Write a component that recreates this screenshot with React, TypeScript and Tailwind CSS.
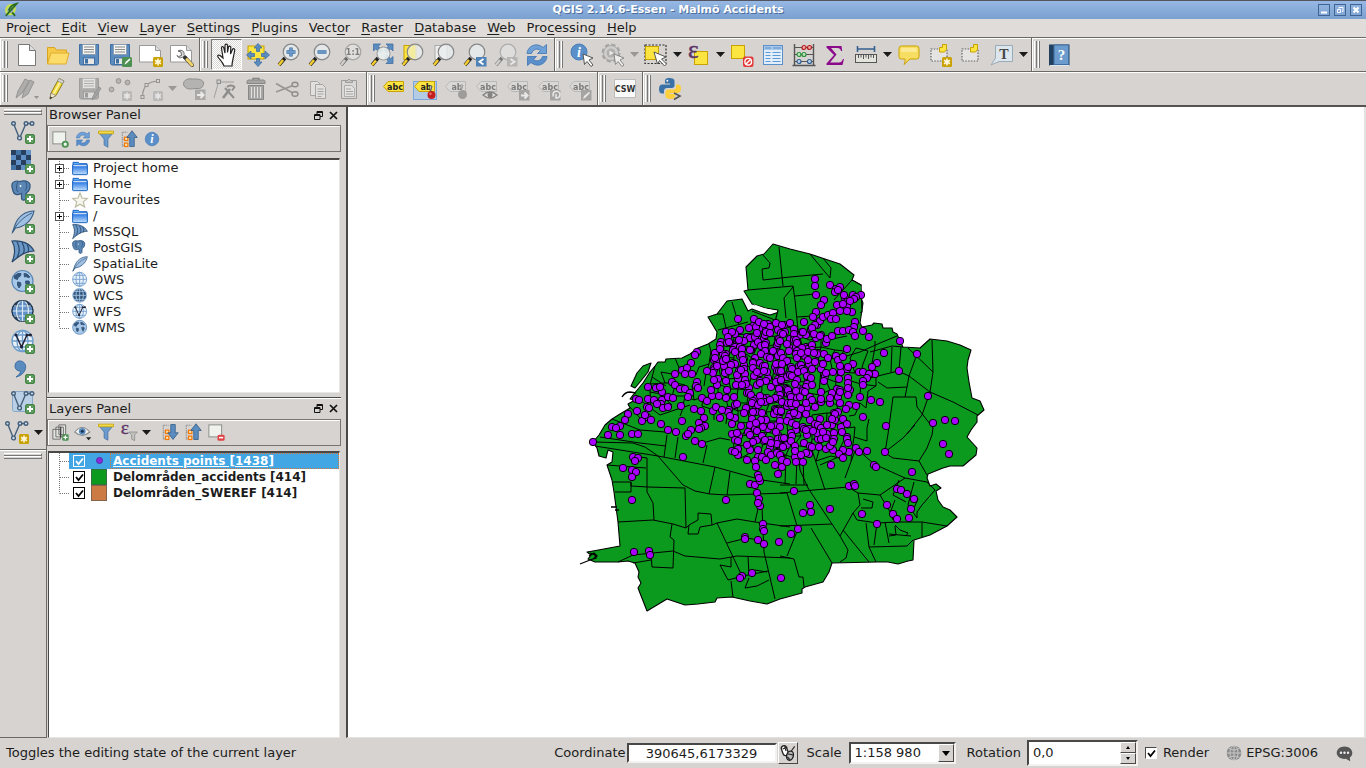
import React from "react";

type IconProps = { size?: number; className?: string; children?: React.ReactNode };

function Svg({ size = 24, className = "", children }: IconProps) {
  return (
    <svg width={size} height={size} viewBox="0 0 24 24" fill="none" aria-hidden="true" className={`block shrink-0 overflow-visible ${className}`}>
      {children}
    </svg>
  );
}

/* ---------- badges shared by several icons ---------- */

const PlusBadge = () => (
  <g>
    <rect x="14.5" y="14.5" width="9" height="9" rx="1.5" fill="#5a9a5a" stroke="#478247" />
    <path d="M19 16v6M16 19h6" stroke="#fff" strokeWidth="2" />
  </g>
);

const StarBadge = () => (
  <g>
    <rect x="14" y="14" width="10" height="10" rx="1.5" fill="#c9a100" />
    <path d="M19 15.5v7M16 17.2l6 3.6M22 17.2l-6 3.6" stroke="#fff8dc" strokeWidth="1.6" />
  </g>
);

const Cursor = () => (
  <path d="M13 11l10 4-4 2 4 5-2 1.5-4-5-2.5 3z" fill="#fff" stroke="#555" strokeWidth="1" />
);

/* ---------- file ---------- */

const NewFile = () => (
  <Svg>
    <path d="M3.5 1.5h11l6 6v15h-17z" fill="#fff" stroke="#777" />
    <path d="M14.500 1.500v6h6" fill="#ddd" stroke="#777" />
  </Svg>
);
const OpenFile = () => (
  <Svg>
    <path d="M1.500 20.500v-16h7l2 2.500h10v4" fill="#f5c94a" stroke="#d9a520" />
    <path d="M1.500 21l3.500-11h18l-3 11z" fill="#fcdc6a" stroke="#e0ae2c" />
  </Svg>
);
const FloppyArt = () => (
  <g>
    <path d="M2.500 1.500h19v19l-1 1.500h-17l-1-1.500z" fill="#5b8cc0" stroke="#3f6ea3" />
    <rect x="5.500" y="1.500" width="13" height="10" fill="#f4f4f2" stroke="#8a9cb0" />
    <path d="M7 4h10M7 6.500h10M7 9h10" stroke="#888" />
    <rect x="6.500" y="15" width="11" height="6.500" fill="#e6e6e4" stroke="#3f6ea3" />
    <rect x="8" y="16" width="3" height="4.500" fill="#3f6ea3" />
  </g>
);
const Save = () => <Svg><FloppyArt /></Svg>;
const SaveAs = () => (
  <Svg>
    <FloppyArt />
    <rect x="14" y="14" width="10" height="10" rx="1.500" fill="#4c9052" />
    <path d="M16.500 21.500l1-2.500 4-3.500 1 1-4 4z" fill="#fff" />
  </Svg>
);
const SheetArt = () => (
  <g>
    <path d="M.5 2.500h16l5 5v11.500h-21z" fill="#fff" stroke="#999" />
    <path d="M16.500 2.500v5h5" fill="#ddd" stroke="#999" />
  </g>
);
const NewComposer = () => <Svg><SheetArt /><StarBadge /></Svg>;
const ComposerManager = () => (
  <Svg>
    <SheetArt />
    <path d="M8 8l3 1 .5 3.500-3 1-1.500-1c1.500 3 4 2.500 5.500 1.500l2 2 2-2-2.500-2.500c.5-3-2-5-5-4z" fill="#ddd" stroke="#666" />
    <path d="M15 14.500l7 7.500" stroke="#333" strokeWidth="4" strokeLinecap="round" />
    <path d="M17 16.500l5 5.500" stroke="#f0d36a" strokeWidth="3" strokeLinecap="round" />
  </Svg>
);

/* ---------- map navigation ---------- */

const Pan = () => (
  <Svg>
    <path d="M9 23c-1-4-4-6-6-9-1-1.500.5-2.500 2-1.500l3 2.500L6.500 5C6.300 3.300 8.300 3 8.800 4.800L10 10V2.500c0-1.800 2.500-1.800 2.500 0V9.500l1-5.500c.4-1.500 2.500-1.200 2.300.5L15.500 11l2-4.500c.7-1.400 2.500-.8 2.200.8-.7 4-1.200 6-1.700 8.700-.5 2-1 4-1 7z" fill="#fff" stroke="#222" strokeWidth="1.200" />
  </Svg>
);
const fourArrows = "M12 .5l4 4.500h-2.500v3.500h-3V5H8zM12 23.500l4-4.500h-2.500v-3.500h-3V19H8zM.5 12L5 8v2.500h3.500v3H5V16zM23.500 12L19 8v2.500h-3.500v3H19V16z";
const PanSelection = () => (
  <Svg>
    <rect x="2" y="3" width="16" height="13" fill="#fce540" stroke="#c9a100" />
    <path d={fourArrows} fill="#5b8cc0" stroke="#3f6ea3" strokeWidth=".8" />
  </Svg>
);
const LensArt = ({ cx = 14, cy = 9 }: { cx?: number; cy?: number }) => (
  <g>
    <path d={`M${cx - 6} ${cy + 6}L2 22`} stroke="#222" strokeWidth="3.500" />
    <path d={`M${cx - 8} ${cy + 8}L2 22`} stroke="#f4cf2e" strokeWidth="2.500" />
    <circle cx={cx} cy={cy} r="7.800" fill="#e9eeee" fillOpacity=".8" stroke="#888" strokeWidth="1.200" />
  </g>
);
const ZoomIn = () => (
  <Svg><LensArt /><path d="M14 4.500v9M9.500 9h9" stroke="#3f6ea3" strokeWidth="3.400" /><path d="M14 5v8M10 9h8" stroke="#6c9ccd" strokeWidth="1.800" /></Svg>
);
const ZoomOut = () => (
  <Svg><LensArt /><path d="M9.500 9h9" stroke="#3f6ea3" strokeWidth="3.400" /><path d="M10 9h8" stroke="#6c9ccd" strokeWidth="1.800" /></Svg>
);
const ZoomActual = () => (
  <Svg className="opacity-60 grayscale">
    <LensArt />
    <text x="14" y="12" textAnchor="middle" fontSize="8" fontWeight="bold" fontFamily="DejaVu Sans, sans-serif" fill="#444">1:1</text>
  </Svg>
);
const ZoomFull = () => (
  <Svg>
    <path d="M3.500 1h7l-2.300 2.300 4 4-2.500 2.500-4-4L3.500 8zM23 1h-7l2.300 2.300-4 4 2.500 2.500 4-4L23 8zM23 20.500h-7l2.300-2.300-4-4 2.500-2.500 4 4 2.200-2.200z" fill="#5b8cc0" stroke="#3f6ea3" strokeWidth=".8" />
    <path d="M8 15l-6 7" stroke="#222" strokeWidth="3.500" />
    <path d="M6 17.500L2 22" stroke="#f4cf2e" strokeWidth="2.500" />
    <circle cx="13.500" cy="10.500" r="6.500" fill="#e9eeee" fillOpacity=".9" stroke="#999" />
  </Svg>
);
const ZoomSelection = () => (
  <Svg><rect x="3" y="2.500" width="12" height="14" fill="#fce540" stroke="#c9a100" /><LensArt /><path d="M14 2.500a6.500 6.500 0 0 0 0 13z" fill="#f5ec8c" opacity=".7" /></Svg>
);
const ZoomLayer = () => (
  <Svg><rect x="3" y="2.500" width="12" height="14" fill="#eee" stroke="#aaa" /><LensArt /></Svg>
);
const ZoomLast = () => (
  <Svg>
    <LensArt />
    <rect x="13" y="14" width="10.500" height="9.500" fill="#4f83b8" />
    <path d="M20.500 16l-4 2.800 4 2.700" stroke="#fff" strokeWidth="1.800" />
  </Svg>
);
const ZoomNext = () => (
  <Svg className="opacity-50 grayscale">
    <LensArt />
    <rect x="13" y="14" width="10.500" height="9.500" fill="#999" />
    <path d="M16.500 16l4 2.800-4 2.700" stroke="#fff" strokeWidth="1.800" />
  </Svg>
);
const Refresh = ({ size = 24 }: IconProps) => (
  <Svg size={size}>
    <path d="M2 10.500C2.500 5 7.500 1 13 2c2 .4 3.700 1.200 5 2.500L21.500 1.500v9h-9l3-3c-3-2.500-7.500-1.500-9 3z" fill="#6fa0d6" stroke="#3f75b3" strokeWidth=".8" />
    <path d="M22 13.500c-.5 5.500-5.500 9.500-11 8.500-2-.4-3.700-1.200-5-2.500l-3.500 3v-9h9l-3 3c3 2.500 7.500 1.500 9-3z" fill="#5b8fcb" stroke="#3f75b3" strokeWidth=".8" />
  </Svg>
);

/* ---------- attributes ---------- */

const Identify = () => (
  <Svg>
    <circle cx="9" cy="9" r="8" fill="#5b8fc9" stroke="#4a7db5" />
    <text x="9" y="14" textAnchor="middle" fontSize="14" fontStyle="italic" fontWeight="bold" fontFamily="Liberation Serif, serif" fill="#fff">i</text>
    <Cursor />
  </Svg>
);
const RunAction = () => (
  <Svg className="opacity-60 grayscale">
    <circle cx="10" cy="10" r="8" stroke="#888" strokeWidth="3" strokeDasharray="4 2.300" />
    <circle cx="10" cy="10" r="7.500" fill="#ccc" stroke="#888" />
    <circle cx="10" cy="10" r="4.500" fill="#999" />
    <path d="M8.500 7.500v5l4-2.500z" fill="#fff" />
    <Cursor />
  </Svg>
);
const SelectFeature = () => (
  <Svg>
    <rect x="1" y="2" width="21" height="18.500" stroke="#333" strokeWidth="1.200" strokeDasharray="2 1.500" />
    <rect x="1.500" y="3.500" width="13" height="13" fill="#fce540" stroke="#c9a100" />
    <path d="M10 9l12 5-4.500 2 5 5-2 2-5-5.500-2 3.500z" fill="#fff" stroke="#555" />
  </Svg>
);
const SelectExpression = () => (
  <Svg>
    <rect x="7.500" y="8.500" width="13" height="13" fill="#fce540" stroke="#c9a100" />
    <text x="1" y="15" fontSize="25" fontFamily="Liberation Serif, serif" fill="#5c3566" stroke="#5c3566" strokeWidth=".5">ε</text>
  </Svg>
);
const Deselect = () => (
  <Svg>
    <rect x="1.500" y="2.500" width="13" height="13" fill="#fce540" stroke="#c9a100" />
    <rect x="13" y="13.500" width="10.500" height="10.500" rx="2" fill="#e23a3a" />
    <circle cx="18.200" cy="18.700" r="3.300" stroke="#fff" strokeWidth="1.400" />
    <path d="M16 21l4.500-4.500" stroke="#fff" strokeWidth="1.400" />
  </Svg>
);
const AttributeTable = () => (
  <Svg>
    <rect x="2.500" y="2.500" width="19" height="19" fill="#e4eefa" stroke="#5b8fc9" />
    <rect x="3" y="3" width="18" height="4" fill="#a8c8ea" />
    <path d="M4 5h6M12 5h8" stroke="#5b8fc9" />
    <path d="M4.500 9.500h5M4.500 12.500h5M4.500 15.500h5M4.500 18.500h5M11.500 9.500h8M11.500 12.500h8M11.500 15.500h8M11.500 18.500h8" stroke="#5b9bd5" />
  </Svg>
);
const Calculator = () => (
  <Svg>
    <path d="M2.500 1v21M21.500 1v21M.5 22.500h23" stroke="#555" strokeWidth="1.400" />
    <path d="M2 4.500h20M2 11.500h20M2 18.500h20" stroke="#555" />
    <g strokeWidth="1.200">
      <circle cx="12" cy="4.500" r="2" fill="#f3a5a5" stroke="#b02020" />
      <circle cx="17.500" cy="4.500" r="2" fill="#f3a5a5" stroke="#b02020" />
      <circle cx="7" cy="11.500" r="2" fill="#bfe6bf" stroke="#2f8f3f" />
      <circle cx="12" cy="11.500" r="2" fill="#bfe6bf" stroke="#2f8f3f" />
      <circle cx="7" cy="18.500" r="2" fill="#bcd6ee" stroke="#35618f" />
      <circle cx="17.500" cy="18.500" r="2" fill="#bcd6ee" stroke="#35618f" />
    </g>
  </Svg>
);
const Statistics = () => (
  <Svg>
    <path d="M3.500 3h15l.7 5h-1.200c-.6-2.300-1.500-3-3.500-3H8l5.500 6.500L7 19.500h9c2 0 3-1 4-3.500h1l-1.500 6H3.500v-1.500l7.500-8.500L3.500 4.500z" fill="#8b0a8b" />
  </Svg>
);
const Measure = () => (
  <Svg>
    <path d="M3.500 6h17M3.500 3v6M20.500 3v6" stroke="#35618f" strokeWidth="1.600" />
    <rect x="1.500" y="11.500" width="21" height="8" fill="#e4e4de" stroke="#555" />
    <path d="M4.500 12v3M7 12v2.500M9.500 12v4M12 12v2.500M14.500 12v4M17 12v2.500M19.500 12v3" stroke="#555" />
  </Svg>
);
const MapTips = () => (
  <Svg>
    <path d="M4.500 3h15q2.500 0 2.500 2.500v8q0 2.500-2.500 2.500H13l-6 5.500c1-2 1.300-3.500 1-5.500H4.500Q2 16 2 13.500v-8Q2 3 4.500 3z" fill="#f7dd62" stroke="#c9a100" />
    <path d="M5 5h13q2 0 2 2v2H4V6.500z" fill="#fcf0a8" opacity=".7" />
  </Svg>
);
const BookmarkArt = () => (
  <g>
    <rect x="3" y="6" width="16" height="12" fill="#e6e4e2" stroke="#666" strokeWidth="1.200" strokeDasharray="1.500 1.300" />
    <path d="M11.500 4.500h3v-3h4v5l-2 2.500h-5z" fill="#fce540" stroke="#c9a100" />
  </g>
);
const NewBookmark = () => <Svg><BookmarkArt /><StarBadge /></Svg>;
const ShowBookmarks = () => <Svg><BookmarkArt /></Svg>;
const Annotation = () => (
  <Svg>
    <path d="M5.500 2.500h17v16H9l-8 3.500 4.500-7z" fill="#dde6ec" stroke="#9aabb8" />
    <text x="14" y="15.500" textAnchor="middle" fontSize="14" fontWeight="bold" fontFamily="Liberation Serif, serif" fill="#444">T</text>
  </Svg>
);
const HelpBook = () => (
  <Svg>
    <rect x="2" y="1.500" width="20.500" height="21" fill="#22405f" />
    <rect x="7" y="2" width="14.500" height="19.500" fill="#6c9ccd" stroke="#3f6ea3" />
    <path d="M3 22.500h19" stroke="#dfe6ee" />
    <text x="14.500" y="17" textAnchor="middle" fontSize="15" fontWeight="bold" fontFamily="Liberation Serif, serif" fill="#fff">?</text>
  </Svg>
);

/* ---------- digitizing ---------- */

const Pencils = () => (
  <Svg className="opacity-50 grayscale">
    <path d="M1 21l2-7L10 2l4 2-7 12zM7 21l2-7L15 3l4 2-6 12z" fill="#888" stroke="#555" />
    <path d="M19 19h5l-2.500 3z" fill="#555" />
  </Svg>
);
const Pencil = () => (
  <Svg>
    <path d="M4 22l1-6L13 1.500l5 2.500-8 14.500z" fill="#f3da3c" stroke="#8a7a1a" />
    <path d="M7.500 17L15.500 2.700" stroke="#fff7b0" strokeWidth="1.500" />
    <path d="M4 22l1-6 5 2.500z" fill="#f5e6c8" stroke="#777" strokeWidth=".7" />
    <path d="M13 1.500l5 2.500-1.500 2.500-5-2.500z" fill="#d5d5d5" stroke="#888" strokeWidth=".7" />
    <path d="M4 22l.4-2.500 1.800 1z" fill="#222" />
  </Svg>
);
const SaveEdits = () => (
  <Svg className="opacity-50 grayscale"><FloppyArt /><path d="M15 23l1-4 6-9 2 1.500-6 9z" fill="#777" stroke="#444" strokeWidth=".8" /></Svg>
);
const AddPoint = () => (
  <Svg className="opacity-50 grayscale">
    <g fill="#999" stroke="#555"><circle cx="3.500" cy="12.500" r="2.400" /><circle cx="10.500" cy="4" r="2.400" /><circle cx="19.500" cy="5.500" r="2.400" /></g>
    <StarBadge />
  </Svg>
);
const CircularString = () => (
  <Svg className="opacity-50 grayscale">
    <path d="M3.500 20C3.500 10 8 4.500 19 4" stroke="#555" strokeWidth="1.200" />
    <g fill="#ddd" stroke="#555"><rect x="2" y="18.500" width="3" height="3" /><rect x="6" y="6.500" width="3" height="3" /><rect x="17.500" y="2.500" width="3" height="3" /></g>
    <StarBadge />
  </Svg>
);
const MoveFeature = () => (
  <Svg className="opacity-55 grayscale">
    <path d="M2 9c-2-5 3-8 8-7 4 0 11-.5 11.500 4 0 4-2.500 6-6.500 5.500-4-.3-9 2.500-13-2.500z" fill="#999" stroke="#555" />
    <rect x="13" y="12.500" width="10.500" height="10.500" fill="#888" />
    <path d="M15 18h6M18.500 15l3 3-3 3" stroke="#fff" strokeWidth="2" />
  </Svg>
);
const NodeTool = () => (
  <Svg className="opacity-55 grayscale">
    <path d="M1 21L5.500 5H21" stroke="#777" />
    <rect x="4" y="3" width="3.500" height="3.500" fill="#ccc" stroke="#555" />
    <path d="M10 21l7-9" stroke="#555" strokeWidth="2.600" />
    <path d="M12 11l9 10" stroke="#555" strokeWidth="2" />
    <path d="M14 10c2-2 6-2 7.500 0l-2.500 3.500" stroke="#555" strokeWidth="1.800" />
  </Svg>
);
const Trash = () => (
  <Svg className="opacity-60 grayscale">
    <path d="M9 3V1.500h6V3" stroke="#555" strokeWidth="1.500" />
    <path d="M3 6.500V4.500q0-1.500 1.500-1.500h15q1.500 0 1.500 1.500v2z" fill="#888" stroke="#555" />
    <path d="M4.500 8.500h15v14h-15z" fill="#888" stroke="#555" />
    <path d="M7.500 10v11M10.500 10v11M13.500 10v11M16.500 10v11" stroke="#eee" />
  </Svg>
);
const Cut = () => (
  <Svg className="opacity-55 grayscale">
    <path d="M1 6.500l16 9M1 15l17-6.500" stroke="#666" strokeWidth="1.800" />
    <ellipse cx="20" cy="7.500" rx="3" ry="2.200" stroke="#555" strokeWidth="1.400" />
    <ellipse cx="20" cy="17" rx="3" ry="2.200" stroke="#555" strokeWidth="1.400" />
  </Svg>
);
const Copy = () => (
  <Svg className="opacity-50 grayscale">
    <path d="M4.500 4.500h7l3 3v11h-10z" fill="#eee" stroke="#777" />
    <path d="M9.500 7.500h7l3 3v11h-10z" fill="#eee" stroke="#777" />
    <path d="M11.500 12h6M11.500 14.500h6M11.500 17h6M11.500 19.500h4" stroke="#777" />
  </Svg>
);
const Paste = () => (
  <Svg className="opacity-50 grayscale">
    <path d="M4.500 3.500h15v18h-15z" fill="#ddd" stroke="#666" />
    <path d="M8.500 5.500V3.500h2q1.500-3 3 0h2v2z" fill="#bbb" stroke="#666" />
    <path d="M7.500 8.500h7l3 3v8h-10z" fill="#f2f2f2" stroke="#888" />
    <path d="M9 12h5M9 14.500h7M9 17h7" stroke="#777" />
  </Svg>
);

/* ---------- labels ---------- */

const Tag = ({ text = "abc" }: { text?: string }) => (
  <g>
    <path d="M1.500 9.500L6 4.500h15.500v10H6z" fill="#fce540" stroke="#c9a100" />
    <text x="13" y="12.500" textAnchor="middle" fontSize="8" fontWeight="bold" fontFamily="DejaVu Sans, sans-serif" fill="#222">{text}</text>
  </g>
);
const Labeling = () => <Svg><Tag /></Svg>;
const PinHighlight = () => (
  <Svg>
    <rect x=".5" y="4.500" width="23" height="18" fill="#b4cbe6" stroke="#7ba7dd" />
    <Tag text="ab" />
    <path d="M17.500 15l-1-6h2.500z" fill="#eee" stroke="#555" />
    <circle cx="18.500" cy="18" r="4" fill="#c42020" />
    <circle cx="17.500" cy="16.800" r="1.200" fill="#e87070" />
  </Svg>
);
const PinLabel = () => (
  <Svg className="opacity-50 grayscale"><Tag text="ab" /><path d="M17.500 13l-1-5h2.500z" fill="#ccc" stroke="#666" /><circle cx="18.500" cy="17.500" r="4.500" fill="#666" /></Svg>
);
const ShowLabel = () => (
  <Svg className="opacity-50 grayscale"><Tag /><path d="M8 18q7-6 14 0-7 6-14 0z" fill="#eee" stroke="#333" strokeWidth="1.300" /><circle cx="15" cy="18" r="2.500" fill="#333" /></Svg>
);
const MoveLabel = () => (
  <Svg className="opacity-50 grayscale"><Tag /><rect x="13" y="13" width="10.500" height="10.500" fill="#777" /><path d="M15 18.500h6M18.500 15.500l3 3-3 3" stroke="#fff" strokeWidth="2" /></Svg>
);
const RotateLabel = () => (
  <Svg className="opacity-50 grayscale"><Tag /><rect x="13" y="13" width="10.500" height="10.500" fill="#777" /><path d="M20.500 21a3.500 3.500 0 1 0-4-1.500M19 17v4h2.500" stroke="#fff" strokeWidth="1.500" /></Svg>
);
const ChangeLabel = () => (
  <Svg className="opacity-50 grayscale"><Tag /><rect x="13" y="13" width="10.500" height="10.500" fill="#777" /><path d="M15 22l1-3 5-4 1 1-5 5z" fill="#fff" /></Svg>
);

const Csw = () => (
  <Svg>
    <path d="M1.500 2.500h21v18h-21z" fill="#fafafa" stroke="#bbb" />
    <text x="12" y="14.500" textAnchor="middle" fontSize="8" fontWeight="bold" fontFamily="DejaVu Sans, sans-serif" fill="#333">CSW</text>
  </Svg>
);
const Python = () => (
  <Svg>
    <path d="M11.500 1C7.500 1 7 2.700 7 4v2.500h5v1H4.500C2 7.500 1 9.500 1 12c0 3 1.300 4.500 3 4.500h2V14c0-2 1.500-3 3-3h5c1.500 0 2.500-1.200 2.500-2.500V4c0-2-2-3-5-3z" fill="#3a72a8" />
    <circle cx="9.300" cy="3.800" r="1" fill="#fff" />
    <path d="M12.500 22c4 0 4.500-1.700 4.500-3v-2h-5v-1h7.500c2.500 0 3.500-2 3.500-4.500 0-3-1.300-4-3-4h-2V10c0 2-1.500 2.500-3 2.500h-5c-1.500 0-2.500 1.200-2.500 2.500v4c0 2 2 3 5 3z" fill="#fccf3b" />
    <path d="M16 16l6 3-6 3.500" stroke="#555" strokeWidth="1.600" />
  </Svg>
);

/* ---------- layer sources ---------- */

const VectorNodes = ({ stroke = "#44607c" }: { stroke?: string }) => (
  <g stroke={stroke} strokeWidth="1.400">
    <path d="M2.500 3.500L8.500 18.500 15 3.500h6" />
    <g fill="#cfdae6"><circle cx="2.500" cy="3.500" r="1.800" /><circle cx="15" cy="3.500" r="1.800" /><circle cx="21" cy="3.500" r="1.800" /><circle cx="8.500" cy="18" r="1.900" /></g>
  </g>
);
const AddVector = () => <Svg><VectorNodes /><PlusBadge /></Svg>;
const AddRaster = () => (
  <Svg>
    <rect width="20" height="20" fill="#5f8fc4" />
    <path d="M0 0h5v5H0zM10 0h5v5h-5zM5 5h5v5H5zM15 5h5v5h-5zM0 10h5v5H0zM10 10h5v5h-5zM5 15h5v5H5z" fill="#27405f" />
    <path d="M5 0h5v5H5zM0 15h5v5H0z" fill="#4473a6" />
    <PlusBadge />
  </Svg>
);
const ElephantArt = () => (
  <g>
    <path d="M1 4c1-3 5-3.500 8-2.500 4-1.500 9-.5 10 3 .5 4-1 6.500-3 8l-1 1v5c-1 2.500-4 2-4.500 0v-5C6 15.500 3 15 2 11 1 8 .5 6 1 4z" fill="#5b86b4" stroke="#2f567f" strokeWidth="1.200" />
    <path d="M7 2c-2 3-2 7 0 10M14.500 2c2 3 1.500 7-.5 9" stroke="#2f567f" />
    <circle cx="9.500" cy="6" r=".9" fill="#fff" />
  </g>
);
const FeatherArt = () => (
  <g>
    <path d="M23 1C15 1 7 6 4 15l-2.500 7.500L4.500 18C13 17 21 11 23 1z" fill="#9fc0e2" stroke="#3b5f86" strokeWidth="1.200" />
    <path d="M1 23.500C5 14 12 7 21 3" stroke="#3b5f86" />
  </g>
);
const SailArt = () => (
  <g>
    <path d="M1 1c9-1 18 2 22 10-8 0-14 4-22 11C4 15 5 8 1 1z" fill="#6c98c8" stroke="#27486b" strokeWidth="1.200" />
    <path d="M6 1.500c3 6 3 11 0 16M11 2.500c3 5 3 8 1 11.500M16 4.500c2 3 2 5 1 8" stroke="#27486b" strokeWidth="1.200" />
  </g>
);
const GlobeArt = ({ fill = "#e9f2fb", line = "#6f9dcc" }: { fill?: string; line?: string }) => (
  <g stroke={line} strokeWidth="1.300">
    <circle cx="11.500" cy="11" r="10.500" fill={fill} />
    <path d="M1 11h21M11.500 .5v21M3 5h17M3 17h17" />
    <ellipse cx="11.500" cy="11" rx="5.500" ry="10.500" />
  </g>
);
const WorldArt = () => (
  <g>
    <circle cx="11.500" cy="11" r="10.500" fill="#a8c8ea" stroke="#5b86b4" strokeWidth="1.200" />
    <path d="M3 6l4-2.500 3 0-.5 2.500-2.500 1.500-.5 2-3-1zM13 3.500l3 .5 3 3-2 .5-2-1-1.500.5zM6.500 12l3 .5.500 2.500-2 3-1.500-3zM14.500 11l3.500 0 .5 2-2 4-1.500-3z" fill="#35577c" stroke="#35577c" strokeLinejoin="round" />
  </g>
);
const AddPostgis = () => <Svg><ElephantArt /><PlusBadge /></Svg>;
const AddSpatialite = () => <Svg><FeatherArt /><PlusBadge /></Svg>;
const AddMssql = () => <Svg><SailArt /><PlusBadge /></Svg>;
const AddWms = () => <Svg><WorldArt /><PlusBadge /></Svg>;
const AddWcs = () => (
  <Svg>
    <circle cx="11.500" cy="11" r="11" fill="#27405f" />
    <path d="M8 1h7v20H8zM2 7h19v8H2z" fill="#5f8fc4" />
    <path d="M1 11h21M11.500 0v22M3 6h17M3 16h17" stroke="#dbe9f7" strokeWidth="1.200" />
    <ellipse cx="11.500" cy="11" rx="6" ry="10.500" stroke="#dbe9f7" strokeWidth="1.200" />
    <circle cx="11.500" cy="11" r="10.500" stroke="#1f3650" />
    <PlusBadge />
  </Svg>
);
const WfsArt = () => (
  <g>
    <GlobeArt />
    <path d="M5 5l5.500 12L16 5h3" stroke="#223" strokeWidth="1.500" />
    <circle cx="5" cy="5" r="1.500" fill="#223" /><circle cx="10.500" cy="17" r="1.500" fill="#223" /><circle cx="16" cy="5" r="1.500" fill="#223" /><circle cx="19.500" cy="5" r="1.500" fill="#223" />
  </g>
);
const AddWfs = () => <Svg><WfsArt /><PlusBadge /></Svg>;
const AddCsv = () => (
  <Svg><path d="M8 1c5-.5 8 4 6 9-1.500 4-5 6-9 7 3-2 4.500-4 4.500-6C6 11 4 9 4 6c0-3 2-5 4-5z" fill="#5b8cc0" stroke="#3f6ea3" /><PlusBadge /></Svg>
);
const AddVirtual = () => (
  <Svg><rect x="1.500" y="1.500" width="20" height="20" rx="2" fill="#b9d0e6" stroke="#8aa7c4" /><VectorNodes /><PlusBadge /></Svg>
);
const NewShape = () => <Svg><VectorNodes /><StarBadge /></Svg>;

/* ---------- panel icons ---------- */

const AddItem = () => <Svg size={18}><rect x="2.500" y="2.500" width="17" height="16" fill="#f0f2ee" stroke="#8a8d88" strokeWidth="1.300" /><circle cx="19" cy="19" r="3.500" fill="#e8f5e8" stroke="#4c9052" strokeWidth="2.500" /></Svg>;
const Filter = () => (
  <Svg size={18}>
    <path d="M2 3h20l-7.500 9v11l-5-3v-8z" fill="#6c9ccd" stroke="#3f6ea3" />
    <path d="M2 1.500h20v3.500H2z" fill="#f5dc4a" stroke="#c9a100" />
  </Svg>
);
const Tree = () => (
  <g>
    <path d="M3 3v19M3 3h7M3 12h7M3 21h7" stroke="#888" strokeWidth="1.200" strokeDasharray="2 1" />
    <rect x="6" y="9.500" width="4.500" height="4.500" fill="#fce0b0" stroke="#f57900" strokeWidth="1.600" />
    <rect x="6" y="17.500" width="4.500" height="4.500" fill="#fce0b0" stroke="#f57900" strokeWidth="1.600" />
  </g>
);
const CollapseAll = () => <Svg size={18}><Tree /><path d="M16 1l7 9h-4v12h-6V10H9z" fill="#5b8cc0" stroke="#2f567f" /></Svg>;
const ExpandAll = () => <Svg size={18}><Tree /><path d="M16 22l7-9h-4V2h-6v11H9z" fill="#5b8cc0" stroke="#2f567f" /></Svg>;
const Info = () => (
  <Svg size={18}>
    <circle cx="12" cy="12" r="9" fill="#5b8fc9" stroke="#4a7db5" />
    <text x="12" y="17.500" textAnchor="middle" fontSize="16" fontStyle="italic" fontWeight="bold" fontFamily="Liberation Serif, serif" fill="#fff">i</text>
  </Svg>
);
const AddGroup = () => (
  <Svg size={18}>
    <path d="M2.500 8.500h10v13h-10zM6.500 5.500h10v13h-10zM10.500 2.500h9v13h-9z" fill="#e4e4e0" stroke="#666" strokeWidth="1.200" />
    <path d="M13 19V5" stroke="#333" strokeWidth="1.500" />
    <rect x="15" y="15" width="8.500" height="8.500" rx="1.500" fill="#4c9052" />
    <path d="M19.200 16.500v5.500M16.500 19.200H22" stroke="#fff" strokeWidth="1.800" />
  </Svg>
);
const Visibility = () => (
  <Svg size={18}>
    <path d="M1 12q10-12 20 0-10 9-20 0z" fill="#f4f4f4" stroke="#8a8d88" strokeWidth="1.500" />
    <circle cx="11" cy="11" r="4.500" fill="#5b8cc0" />
    <circle cx="11" cy="11" r="2" fill="#1d334c" />
    <path d="M16 19h7l-3.500 4z" fill="#222" />
  </Svg>
);
const EpsFilter = () => (
  <Svg size={18}>
    <text x="1" y="15" fontSize="26" fontFamily="Liberation Serif, serif" fill="#5c3566" stroke="#5c3566" strokeWidth=".4">ε</text>
    <path d="M12 12h11l-3.500 4v7.500l-4-2V16z" fill="#c2c2be" stroke="#8a8a88" />
  </Svg>
);
const RemoveLayer = () => (
  <Svg size={18}><rect x="2.500" y="2.500" width="17" height="16" fill="#f0f2ee" stroke="#8a8d88" strokeWidth="1.300" /><rect x="14" y="15.500" width="9.500" height="8" rx="2" fill="#e04545" /><path d="M16 19.500h5.500" stroke="#fff" strokeWidth="2" /></Svg>
);
const Folder = () => (
  <Svg size={16}>
    <path d="M1.500 21V3.500h8l1.500 2h11.500V21z" fill="#5fa8f5" stroke="#1460c0" strokeWidth="1.400" />
    <path d="M1 7.500h22V21q0 1-1 1H2q-1 0-1-1z" fill="url(#folder)" stroke="#1460c0" strokeWidth="1.400" />
    <path d="M2 8.500h20" stroke="#fff" strokeWidth="1.400" />
    <defs><linearGradient id="folder" x1="0" y1="0" x2="0" y2="1"><stop stopColor="#1a6be0" /><stop offset="1" stopColor="#c4e0fc" /></linearGradient></defs>
  </Svg>
);
const Star = () => <Svg size={16}><path d="M12 1.500l3 7.500 8 .6-6 5.200 2 7.700-7-4.200-7 4.200 2-7.700-6-5.200 8-.6z" fill="#f5f5ec" stroke="#b9b9a0" strokeWidth="1.600" /></Svg>;

/* ---------- building blocks ---------- */

function ToolButton({ label, icon, checked, small }: { label: string; icon: React.ReactNode; checked?: boolean; small?: boolean }) {
  const size = small ? "h-6 w-[23px]" : "h-[31px] w-[31px]";
  const look = checked
    ? "border border-t-[#777] border-l-[#777] border-b-white border-r-white bg-[repeating-conic-gradient(#ffffff_0_25%,#dad7d4_0_50%)] bg-size-[2px_2px]"
    : "";
  return (
    <button type="button" aria-label={label} className={`flex shrink-0 items-center justify-center ${size} ${look}`}>
      {icon}
    </button>
  );
}

function ArrowButton({ label, disabled }: { label: string; disabled?: boolean }) {
  return (
    <button type="button" aria-label={label} className="flex h-[31px] w-3 shrink-0 items-center justify-center">
      <svg width="9" height="5" viewBox="0 0 9 5" aria-hidden="true">
        <path d="M0 0h9L4.500 5z" fill={disabled ? "#9a9896" : "#1a1a1a"} />
      </svg>
    </button>
  );
}

const Grip = () => (
  <div className="mr-[3px] flex h-[27px] shrink-0 gap-px">
    <div className="w-[3px] border-l border-r border-l-white border-r-[#777]" />
    <div className="w-[2px] border-l border-r border-l-white border-r-[#777]" />
  </div>
);

function ToolGroup({ children, last }: { children: React.ReactNode; last?: boolean }) {
  return (
    <div className={`flex items-center border-l border-l-white pr-[2px] pl-px ${last ? "" : "border-r border-r-[#6b6966]"}`}>
      <Grip />
      {children}
    </div>
  );
}

type Tool = [label: string, icon: React.ReactNode, menu?: "on" | "off"];

function Tools({ items, checked }: { items: Tool[]; checked?: string }) {
  return (
    <>
      {items.map(([label, icon, menu]) => (
        <React.Fragment key={label}>
          <ToolButton label={label} icon={icon} checked={label === checked} />
          {menu && <ArrowButton label={`${label} options`} disabled={menu === "off"} />}
        </React.Fragment>
      ))}
    </>
  );
}

const fileTools: Tool[] = [
  ["New", <NewFile />],
  ["Open", <OpenFile />],
  ["Save", <Save />],
  ["Save As", <SaveAs />],
  ["New Print Composer", <NewComposer />],
  ["Composer Manager", <ComposerManager />],
];
const navTools: Tool[] = [
  ["Pan Map", <Pan />],
  ["Pan to Selection", <PanSelection />],
  ["Zoom In", <ZoomIn />],
  ["Zoom Out", <ZoomOut />],
  ["Zoom Native", <ZoomActual />],
  ["Zoom Full", <ZoomFull />],
  ["Zoom to Selection", <ZoomSelection />],
  ["Zoom to Layer", <ZoomLayer />],
  ["Zoom Last", <ZoomLast />],
  ["Zoom Next", <ZoomNext />],
  ["Refresh", <Refresh />],
];
const attributeTools: Tool[] = [
  ["Identify Features", <Identify />],
  ["Run Feature Action", <RunAction />, "off"],
  ["Select Features", <SelectFeature />, "on"],
  ["Select by Expression", <SelectExpression />, "on"],
  ["Deselect", <Deselect />],
  ["Attribute Table", <AttributeTable />],
  ["Field Calculator", <Calculator />],
  ["Statistical Summary", <Statistics />],
  ["Measure Line", <Measure />, "on"],
  ["Map Tips", <MapTips />],
  ["New Bookmark", <NewBookmark />],
  ["Show Bookmarks", <ShowBookmarks />],
  ["Text Annotation", <Annotation />, "on"],
];
const editTools: Tool[] = [
  ["Current Edits", <Pencils />],
  ["Toggle Editing", <Pencil />],
  ["Save Layer Edits", <SaveEdits />],
  ["Add Feature", <AddPoint />],
  ["Add Circular String", <CircularString />, "off"],
  ["Move Feature", <MoveFeature />],
  ["Node Tool", <NodeTool />],
  ["Delete Selected", <Trash />],
  ["Cut Features", <Cut />],
  ["Copy Features", <Copy />],
  ["Paste Features", <Paste />],
];
const labelTools: Tool[] = [
  ["Layer Labeling", <Labeling />],
  ["Highlight Pinned Labels", <PinHighlight />],
  ["Pin Labels", <PinLabel />],
  ["Show Labels", <ShowLabel />],
  ["Move Label", <MoveLabel />],
  ["Rotate Label", <RotateLabel />],
  ["Change Label", <ChangeLabel />],
];
const layerTools: Tool[] = [
  ["Add Vector Layer", <AddVector />],
  ["Add Raster Layer", <AddRaster />],
  ["Add PostGIS Layers", <AddPostgis />],
  ["Add SpatiaLite Layer", <AddSpatialite />],
  ["Add MSSQL Layer", <AddMssql />],
  ["Add WMS Layer", <AddWms />],
  ["Add WCS Layer", <AddWcs />],
  ["Add WFS Layer", <AddWfs />],
  ["Add Delimited Text Layer", <AddCsv />],
  ["Add Virtual Layer", <AddVirtual />],
];

/* ---------- header ---------- */

function TitleBar() {
  const button = "flex h-3 w-3 items-center justify-center border border-[#3f6494]";
  return (
    <header className="flex h-[19px] items-center border-t border-[#55555f] bg-linear-to-b from-[#97b8e4] to-[#7aa0d0] pr-1">
      <Svg size={14} className="ml-1">
        <path d="M10 4c5-1 9 3 8 8-1 4-4 7-8 7s-7-3-6-8c1-4 3-6 6-7z" stroke="#c8e04a" strokeWidth="4" />
        <path d="M3 22L22 1c-6 1-12 6-14 12M14 16l5 6" stroke="#2c6b1e" strokeWidth="3" />
      </Svg>
      <h1 className="flex-1 text-center text-[11px] leading-4 font-bold text-white [text-shadow:1px_1px_0_#4a6d9c]">
        QGIS 2.14.6-Essen - Malmö Accidents
      </h1>
      <div className="flex gap-1">
        <button type="button" aria-label="Minimize" className={button}>
          <svg width="8" height="8" viewBox="0 0 8 8"><path d="M1 6.500h6" stroke="#fff" strokeWidth="2" /></svg>
        </button>
        <button type="button" aria-label="Restore" className={button}>
          <svg width="8" height="8" viewBox="0 0 8 8" fill="none" stroke="#fff"><path d="M3 2.500V1.500h4v4H6M1.500 3.500h3v3h-3z" /></svg>
        </button>
        <button type="button" aria-label="Close" className={button}>
          <svg width="8" height="8" viewBox="0 0 8 8"><path d="M1.500 1.500l5 5M6.500 1.500l-5 5" stroke="#fff" strokeWidth="2" /></svg>
        </button>
      </div>
    </header>
  );
}

// text before, the mnemonic letter, text after
const menus: [string, string, string][] = [
  ["Pro", "j", "ect"],
  ["", "E", "dit"],
  ["", "V", "iew"],
  ["", "L", "ayer"],
  ["", "S", "ettings"],
  ["", "P", "lugins"],
  ["Vect", "o", "r"],
  ["", "R", "aster"],
  ["", "D", "atabase"],
  ["", "W", "eb"],
  ["Pro", "c", "essing"],
  ["", "H", "elp"],
];

function MenuBar() {
  return (
    <nav className="flex h-[18px] items-center bg-[#dfdcd9] pl-px">
      {menus.map(([before, key, after]) => (
        <button type="button" key={before + key + after} className="pr-[6px] pl-[5px] leading-[18px] whitespace-nowrap">
          {before}
          <span className="underline underline-offset-2">{key}</span>
          {after}
        </button>
      ))}
    </nav>
  );
}

const toolRow = "flex h-[34px] border-t border-t-[#6b6966] shadow-[inset_0_1px_0_#fff]";

function Toolbars() {
  return (
    <div>
      <div className={toolRow}>
        <ToolGroup><Tools items={fileTools} /></ToolGroup>
        <ToolGroup><Tools items={navTools} checked="Pan Map" /></ToolGroup>
        <ToolGroup><Tools items={attributeTools} /></ToolGroup>
        <ToolGroup last><Tools items={[["Help", <HelpBook />]]} /></ToolGroup>
      </div>
      <div className={toolRow}>
        <ToolGroup><Tools items={editTools} /></ToolGroup>
        <ToolGroup><Tools items={labelTools} /></ToolGroup>
        <ToolGroup><Tools items={[["MetaSearch", <Csw />]]} /></ToolGroup>
        <ToolGroup last><Tools items={[["Python Console", <Python />]]} /></ToolGroup>
      </div>
    </div>
  );
}

const FlatGrip = () => (
  <div className="mx-1 flex h-[6px] shrink-0 flex-col justify-between">
    <div className="h-[3px] border-t border-r border-b border-t-white border-r-[#777] border-b-[#777]" />
    <div className="h-[3px] border-t border-r border-b border-t-white border-r-[#777] border-b-[#777]" />
  </div>
);

function LayerToolbar() {
  return (
    <aside className="flex w-[47px] shrink-0 flex-col border-r border-b border-[#6b6966] pt-0.5">
      <FlatGrip />
      <div className="flex flex-col items-center pt-0.5">
        {layerTools.map(([label, icon]) => (
          <button type="button" key={label} aria-label={label} className="flex h-[30px] w-[30px] items-center justify-center">
            {icon}
          </button>
        ))}
        <div className="flex h-[30px] w-full items-center gap-[3px]">
          <button type="button" aria-label="New Shapefile Layer" className="ml-[5px]">
            <NewShape />
          </button>
          <ArrowButton label="New layer options" />
        </div>
      </div>
      <div className="mt-0.5 mb-0.5 border-t border-b border-t-[#6b6966] border-b-white" />
      <FlatGrip />
    </aside>
  );
}

/* ---------- docks ---------- */

function Dock({ title, tools, className, children }: { title: string; tools: React.ReactNode; className: string; children: React.ReactNode }) {
  return (
    <section className={`flex min-h-0 flex-col ${className}`}>
      <div className="flex h-[18px] shrink-0 items-start pl-0.5">
        <h2 className="flex-1 leading-4">{title}</h2>
        <button type="button" aria-label={`Float ${title}`} className="flex h-4 w-[15px] items-center justify-center">
          <svg width="9" height="9" viewBox="0 0 9 9" fill="none" stroke="#111"><path d="M3 3V.5h5.500v5H6M3 1.500h5.500M.5 3.500H6v5H.5zM.5 4.500H6" /></svg>
        </button>
        <button type="button" aria-label={`Close ${title}`} className="flex h-4 w-[15px] items-center justify-center">
          <svg width="9" height="9" viewBox="0 0 9 9"><path d="M1 1l7 7M8 1L1 8" stroke="#111" strokeWidth="1.700" /></svg>
        </button>
      </div>
      <div className="flex h-[27px] shrink-0 items-center border border-[#77746f] shadow-[inset_1px_1px_0_#fff]">{tools}</div>
      <div className="mx-px min-h-0 flex-1 overflow-hidden border border-t-2 border-t-[#4a4846] border-r-[#e8e6e4] border-b-[#e8e6e4] border-l-[#4a4846] bg-white">
        {children}
      </div>
    </section>
  );
}

function Branch({ first, last, expandable }: { first?: boolean; last?: boolean; expandable?: boolean }) {
  return (
    <svg width="20" height="16" viewBox="0 0 20 16" fill="none" stroke="#777" className="shrink-0" aria-hidden="true">
      <path d={last ? "M10.500 0v8.500" : first ? "M10.500 1v15" : "M10.500 0v16"} strokeDasharray="1 1" />
      <path d="M11 8.500h9" strokeDasharray="1 1" />
      {expandable && (
        <g shapeRendering="crispEdges">
          <rect x="6.500" y="4.500" width="8" height="8" fill="#fff" stroke="#555" />
          <path d="M8 8.500h5M10.500 6v5" stroke="#000" />
        </g>
      )}
    </svg>
  );
}

const browserItems: { name: string; icon: React.ReactNode; expandable?: boolean }[] = [
  { name: "Project home", icon: <Folder />, expandable: true },
  { name: "Home", icon: <Folder />, expandable: true },
  { name: "Favourites", icon: <Star /> },
  { name: "/", icon: <Folder />, expandable: true },
  { name: "MSSQL", icon: <Svg size={16}><SailArt /></Svg> },
  { name: "PostGIS", icon: <Svg size={16}><ElephantArt /></Svg> },
  { name: "SpatiaLite", icon: <Svg size={16}><FeatherArt /></Svg> },
  { name: "OWS", icon: <Svg size={16}><GlobeArt /></Svg> },
  { name: "WCS", icon: <Svg size={16}><GlobeArt fill="#35577c" line="#a8c8ea" /></Svg> },
  { name: "WFS", icon: <Svg size={16}><WfsArt /></Svg> },
  { name: "WMS", icon: <Svg size={16}><WorldArt /></Svg> },
];

function BrowserPanel() {
  const tools = (
    <>
      <ToolButton small label="Add Selected Layers" icon={<AddItem />} />
      <ToolButton small label="Refresh Browser" icon={<Refresh size={16} />} />
      <ToolButton small label="Filter Browser" icon={<Filter />} />
      <ToolButton small label="Collapse Browser" icon={<CollapseAll />} />
      <ToolButton small label="Properties" icon={<Info />} />
    </>
  );
  return (
    <Dock title="Browser Panel" tools={tools} className="flex-[286_1_0px] [&>:nth-child(2)]:mb-1.5">
      <ul>
        {browserItems.map((item, i) => (
          <li key={item.name} className="flex h-4 items-center leading-4">
            <Branch first={i === 0} last={i === browserItems.length - 1} expandable={item.expandable} />
            <span className="mr-[5px] ml-[3px]">{item.icon}</span>
            {item.name}
          </li>
        ))}
      </ul>
    </Dock>
  );
}

const layers = [
  { name: "Accidents points [1438]", selected: true, swatch: "" },
  { name: "Delområden_accidents [414]", selected: false, swatch: "bg-[#0b9a1e]" },
  { name: "Delområden_SWEREF [414]", selected: false, swatch: "bg-[#cc7b45]" },
];

function Tick({ light, className = "" }: { light?: boolean; className?: string }) {
  return (
    <svg width="9" height="9" viewBox="0 0 9 9" aria-hidden="true" className={`pointer-events-none absolute ${className}`}>
      <path d="M1 4l2.500 3L8 1.500" fill="none" stroke={light ? "#fff" : "#000"} strokeWidth="1.800" />
    </svg>
  );
}

function LayersPanel() {
  const tools = (
    <>
      <ToolButton small label="Add Group" icon={<AddGroup />} />
      <ToolButton small label="Manage Visibility" icon={<Visibility />} />
      <ToolButton small label="Filter Legend" icon={<Filter />} />
      <ToolButton small label="Filter by Expression" icon={<EpsFilter />} />
      <ArrowButton label="Filter options" />
      <span className="w-1.5" />
      <ToolButton small label="Expand All" icon={<ExpandAll />} />
      <ToolButton small label="Collapse All" icon={<CollapseAll />} />
      <ToolButton small label="Remove Layer" icon={<RemoveLayer />} />
    </>
  );
  return (
    <Dock title="Layers Panel" tools={tools} className="flex-[338_1_0px] [&>:nth-child(2)]:mb-[5px]">
      <ul>
        {layers.map((layer, i) => (
          <li key={layer.name} className="flex h-4 items-center">
            <Branch last={i === layers.length - 1} />
            <label className={`flex h-4 flex-1 items-center pl-1 text-[12px] font-bold leading-4 ${layer.selected ? "bg-[#42a5e4] text-white" : ""}`}>
              <span className="relative flex">
                <input
                  type="checkbox"
                  defaultChecked
                  className={`h-3 w-3 appearance-none border ${layer.selected ? "border-white" : "border-black bg-white"}`}
                />
                <Tick light={layer.selected} className="top-[2px] left-[2px]" />
              </span>
              <span className="mr-[3px] ml-[6px] flex h-4 w-4 items-center justify-center">
                {layer.selected ? (
                  <span className="h-[7px] w-[7px] rounded-full border border-[#5a2aa0] bg-[#8a2be2]" />
                ) : (
                  <span className={`h-4 w-4 border border-[#555]/60 ${layer.swatch}`} />
                )}
              </span>
              <span className={`h-4 flex-1 border border-dotted pl-0.5 leading-[14px] ${layer.selected ? "border-[#d9722e] underline" : "border-transparent"}`}>
                {layer.name}
              </span>
            </label>
          </li>
        ))}
      </ul>
    </Dock>
  );
}

/* ---------- map ---------- */

const mainland =
  "593,442 599,435 605,425 612,419 620,414 630,408 628,404 635,400 630,399 633,395 643,383 650,372 655,366 658,362 665,362 666,359 682,358 690,354 698,348 708,344 716,339 717,332 708,317 717,314 727,301 742,299 748,311 752,309 760,312 770,315 776,313 785,311 852,280 861,285 859,293 863,303 860,323 862,327 872,325 874,323 882,324 883,328 892,328 893,332 897,334 900,341 903,347 920,348 930,339 947,341 960,345 971,350 968,360 967,368 969,382 972,398 980,401 984,410 977,416 977,422 971,430 967,437 977,448 976,455 963,466 950,466 943,468 928,474 927,478 930,486 936,484 941,488 936,491 938,500 943,507 950,510 957,517 947,526 930,535 914,540 913,560 908,561 898,564 888,562 877,562 832,563 829,572 823,582 805,587 802,589 802,593 780,599 767,604 750,601 732,597 717,598 715,602 698,604 685,605 667,599 647,611 638,588 641,583 638,577 639,572 635,563 628,561 618,562 595,562 588,559 591,555 587,552 593,551 620,546 618,522 616,507 614,492 612,480 607,465 612,462 613,452 608,450 606,458 599,456 597,448";
const northHarbour =
  "773,244 790,249 810,254 822,258 840,264 854,275 852,280 861,285 862,312 800,332 775,322 778,310 765,308 752,304 744,291 748,290 746,267 757,256 764,254";
const jetties = ["631,386 637,373 643,366 651,363 648,372 640,382 635,388"];

const boundaries = [
  "779,247 783,286", "762,254 770,263 769,268 762,269 763,280 790,277 823,274", "748,290 793,286 795,300 798,330",
  "793,287 784,298 786,318", "795,296 815,294", "810,254 830,278", "823,258 831,268 830,278", "852,280 834,300", "797,317 813,316",
  "732,302 739,325", "717,314 723,314 726,328", "718,330 748,322", "752,311 785,324",
  "843,357 860,352 880,343 897,336", "892,347 891,372", "870,352 892,346 903,347", "901,347 899,370", "908,348 933,372",
  "932,340 933,372 930,392 922,415 907,434", "917,354 909,376 907,387 905,397",
  "870,378 898,371 909,376 930,392 953,402 978,415", "878,382 887,388 907,387", "893,397 916,397 917,407 933,428 932,435 927,448 919,461",
  "893,397 888,434 885,452", "915,425 903,438 885,452", "885,453 893,458 919,461 927,475",
  "856,448 874,464 905,478 927,482 935,490", "905,478 880,495 858,493", "935,490 922,505 917,512 917,518", "914,482 908,505 917,518",
  "853,513 857,520 877,523 897,522 922,522 947,526", "922,522 922,537", "863,499 873,502 872,508 861,508",
  "858,493 860,505 853,513 840,536", "866,523 869,547 876,562", "877,523 874,545", "885,522 889,543", "869,547 907,546 913,540",
  "843,530 869,562", "808,488 840,536 848,550 846,558 840,562", "780,485 808,485", "780,493 848,487 858,493",
  "798,453 800,470 808,488", "812,450 825,490", "787,493 798,529 787,556", "780,526 832,524", "811,528 832,563",
  "780,556 794,559 799,577 803,577 804,587", "895,525 900,530 908,533 906,536", "895,500 890,513 900,520", "889,534 911,536",
  "899,480 893,495 906,502", "880,495 889,510 893,520", "918,499 914,508", "895,526 896,535 889,536",
  "593,442 633,443 645,447 658,456 683,485 695,491 710,494 727,495 787,493", "595,446 658,456 715,467 762,480 790,484",
  "607,465 646,468", "640,457 647,458 647,492 653,503 654,520", "613,482 631,482 631,486 648,487 685,488 686,528",
  "615,492 631,492 631,482", "618,522 653,520 673,524 686,528 689,525 698,520 698,513 711,514 712,525 700,527 698,534 688,534 689,525",
  "712,525 717,523 737,519 755,522 790,527", "717,523 743,578", "727,543 747,538 758,540",
  "672,524 670,537 674,540 673,568 652,567 651,553", "618,562 633,555 673,551 685,556 720,559 737,556 790,558",
  "715,467 709,494", "730,472 727,495", "667,435 664,457", "678,437 675,458", "707,445 703,463",
  "755,522 760,500", "762,508 764,552 775,599", "720,565 728,580 743,576 768,571", "731,581 733,597", "748,556 749,575",
  "731,557 731,567 720,565", "769,580 757,586 745,588 749,578", "755,570 767,572", "633,563 651,560",
  "640,400 660,415 690,405", "655,366 650,385 672,405", "652,377 666,386", "675,358 680,370", "709,344 712,355",
  "612,419 640,430 665,432", "600,437 640,443 666,446", "630,407 640,418",
  "703,443 720,438 730,440", "820,465 850,452", "845,478 856,448", "786,455 785,484", "797,455 796,484", "803,458 804,485",
];

// small repeatable generator so that the scatter is the same on every load
function randomizer(seed: number) {
  let s = seed;
  return () => {
    s = (s * 16807) % 2147483647;
    return s / 2147483647;
  };
}

// irregular net of city blocks
function cityBlocks() {
  const rnd = randomizer(77);
  const cols = 21;
  const rows = 12;
  const node: [number, number][][] = [];
  for (let r = 0; r < rows; r++) {
    node.push([]);
    for (let c = 0; c < cols; c++) {
      node[r].push([Math.round(655 + c * 11 - r * 1.5 + rnd() * 7), Math.round(326 + r * 11 + c * 0.5 + rnd() * 7)]);
    }
  }
  let d = "";
  for (let r = 0; r < rows; r++) {
    for (let c = 0; c < cols; c++) {
      if (r < 4 && c < 7 - r) continue;
      if (r > 7 && c < 8) continue;
      const keep = c < 6 || c > 16 ? 0.45 : 0.2;
      if (c + 1 < cols && rnd() > keep) d += `M${node[r][c]}L${node[r][c + 1]}`;
      if (r + 1 < rows && rnd() > keep) d += `M${node[r][c]}L${node[r + 1][c]}`;
    }
  }
  return d;
}

// dots per 10 unit cell, first cell at 710,320
const density = [
  "00013322112000",
  "01223434332100",
  "02333333442100",
  "23333343331110",
  "33333333341111",
  "22333334331111",
  "12132234331111",
  "10122433431111",
  "01114333431111",
  "11113334321021",
  "00122233342121",
  "00323233222331",
  "00212234222120",
  "00101232110000",
];

function denseAccidents() {
  const rnd = randomizer(4242);
  const out: [number, number][] = [];
  density.forEach((row, r) => {
    [...row].forEach((n, c) => {
      for (let k = 0; k < Number(n); k++) {
        out.push([Math.round(710 + c * 10 + rnd() * 10), Math.round(320 + r * 10 + rnd() * 10)]);
      }
    });
  });
  return out;
}

const accidents =
  "738,319 754,319 759,322 764,324 776,323 782,325 749,328 732,332 728,337 739,340 729,342 720,345 720,349 697,352 695,355 691,363 715,358 726,359 682,370 687,368 675,374 685,374 692,374 707,371 717,366 672,382 675,385 697,382 696,386 698,388 680,389 685,389 711,390 714,380 648,387 656,388 662,392 660,387 690,393 688,397 636,399 639,400 648,399 654,400 662,400 668,397 673,398 702,398 707,401 719,396 726,398 737,404 681,406 694,409 701,411 716,407 722,410 647,407 649,408 661,404 663,408 657,404 668,407 637,411 628,414 625,420 647,417 642,421 651,420 645,415 661,424 704,418 682,421 720,418 730,416 699,423 705,426 701,428 691,430 668,430 676,432 612,427 620,426 616,428 608,435 632,434 638,434 620,435 " +
  "593,442 686,436 695,441 702,444 699,429 688,434 683,457 633,457 638,458 635,461 623,468 632,470 636,472 632,477 632,500 634,552 649,551 650,555 726,500 750,484 755,485 758,475 760,481 759,478 757,493 759,499 760,506 758,503 763,524 763,529 764,531 745,537 745,539 758,540 764,544 779,542 752,573 742,576 740,578 781,578 738,441 732,451 735,452 747,445 747,460 755,461 756,467 766,460 775,465 782,467 778,474 782,460 787,462 " +
  "813,431 826,438 830,446 833,442 847,439 848,443 856,448 849,452 859,452 867,451 843,450 839,454 843,458 885,452 886,426 806,453 801,455 795,451 796,462 803,462 831,465 874,465 876,467 912,472 943,444 949,454 849,486 854,484 855,486 794,491 810,505 803,513 811,512 830,509 862,514 798,529 791,534 877,524 887,505 893,514 897,519 909,518 911,509 897,489 901,490 907,494 914,499 " +
  "815,279 815,286 816,295 824,300 821,305 830,285 836,289 840,287 835,292 838,290 861,295 853,295 856,297 845,298 847,302 847,306 854,299 844,295 850,301 837,305 843,304 852,312 847,311 840,311 816,312 813,317 820,321 823,317 828,315 833,313 831,319 836,319 855,322 854,327 815,325 812,328 814,334 820,336 827,339 832,336 838,331 843,331 849,330 853,332 855,336 863,331 869,337 847,349 843,357 884,353 900,341 917,354 899,371 877,363 872,367 875,374 859,372 863,372 869,374 867,378 863,381 863,385 853,364 848,367 840,366 839,379 848,378 848,383 848,388 848,395 840,392 860,397 871,400 880,402 856,406 846,409 863,417 847,424 842,432 928,396 933,423 945,420 955,421 817,354 814,353 828,358 823,364 826,373 812,369 821,399 832,393 830,398 840,403 835,414 832,419 827,425";

function MapCanvas() {
  const blocks = React.useMemo(cityBlocks, []);
  const dots = React.useMemo(
    () => [...denseAccidents(), ...accidents.split(" ").map((p) => p.split(",").map(Number) as [number, number])],
    [],
  );
  return (
    <main className="min-w-0 flex-1 border-r-2 border-b border-l-2 border-r-[#e4e2e0] border-b-[#e4e2e0] border-l-[#4a4846] bg-white">
      <svg viewBox="348 107 1016 630" className="block h-full w-full" role="img" aria-label="Map of Malmö accidents">
        <g fill="#0b9a1e" stroke="#000" strokeWidth="1.100" strokeLinejoin="round">
          <polygon points={mainland} />
          <polygon points={northHarbour} />
          {jetties.map((p) => <polygon key={p} points={p} />)}
        </g>
        <path d="M785 311L852 281L861 286L860 322L820 335L775 322z" fill="#0b9a1e" />
        <path d="M753 304l6 5 10 4 4-1-1-2-8-2z" fill="#fff" />
        <path d="M622 397q3-5 8-5l6 1M580 564l10-4 6-2-1-3-5-2M611 507h6M615 510h4M589 556l5-3 3 3-4 3" fill="none" stroke="#000" strokeWidth="1.300" />
        <clipPath id="city"><polygon points={mainland} /></clipPath>
        <g fill="none" stroke="#000">
          <path d={blocks} clipPath="url(#city)" />
          {boundaries.map((p) => <polyline key={p} points={p} />)}
        </g>
        <g fill="#aa00ff" stroke="#000">
          {dots.map(([x, y], i) => <circle key={i} cx={x} cy={y} r="3.700" />)}
        </g>
      </svg>
    </main>
  );
}

/* ---------- status bar ---------- */

const sunken = "border-2 border-t-[#4a4846] border-l-[#4a4846] border-r-[#f4f2f0] border-b-[#f4f2f0] bg-white";
const raised = "border border-t-white border-l-white border-r-[#4a4846] border-b-[#4a4846] bg-[#d6d3d0]";

function StatusBar() {
  return (
    <footer className="flex h-[30px] items-center pr-[13px] pl-1.5">
      <span className="flex-1">Toggles the editing state of the current layer</span>
      <label htmlFor="coordinate" className="mr-px">Coordinate</label>
      <input id="coordinate" defaultValue="390645,6173329" className={`h-5 w-[150px] text-center ${sunken}`} />
      <button type="button" aria-label="Toggle extents" className={`ml-px flex h-[22px] w-5 items-center justify-center ${raised}`}>
        <Svg size={16}>
          <rect x="3" y="1" width="8" height="15" rx="4" transform="rotate(-20 7 8)" fill="#fff" stroke="#222" strokeWidth="2" />
          <path d="M4 6l7-3M7 2l2 7" stroke="#222" strokeWidth="1.600" />
          <ellipse cx="15" cy="16" rx="5" ry="7" transform="rotate(15 15 16)" fill="#bbb" stroke="#222" strokeWidth="2" />
          <path d="M11 13l9 2M15 22l-4-4M17 9l5-7" stroke="#222" strokeWidth="1.600" />
        </Svg>
      </button>
      <label htmlFor="scale" className="mr-[7px] ml-[9px]">Scale</label>
      <div className={`relative h-[22px] w-[107px] ${sunken}`}>
        <select id="scale" className="block h-full w-full appearance-none bg-white pl-1 leading-4">
          <option>1:158 980</option>
        </select>
        <span className={`pointer-events-none absolute top-0 right-0 flex h-full w-4 items-center justify-center ${raised}`}>
          <svg width="8" height="5" viewBox="0 0 8 5"><path d="M0 0h8L4 5z" /></svg>
        </span>
      </div>
      <label htmlFor="rotation" className="mr-1.5 ml-[11px]">Rotation</label>
      <div className={`flex h-[26px] w-[111px] ${sunken}`}>
        <input id="rotation" defaultValue="0,0" className="min-w-0 flex-1 pl-1" />
        <span className="flex w-4 flex-col">
          <button type="button" aria-label="Increase rotation" className={`flex flex-1 items-center justify-center ${raised}`}>
            <svg width="4" height="3" viewBox="0 0 4 3"><path d="M0 3h4L2 0z" /></svg>
          </button>
          <button type="button" aria-label="Decrease rotation" className={`flex flex-1 items-center justify-center ${raised}`}>
            <svg width="4" height="3" viewBox="0 0 4 3"><path d="M0 0h4L2 3z" /></svg>
          </button>
        </span>
      </div>
      <label className="ml-[7px] flex items-center">
        <span className="relative mr-1.5 flex">
          <input type="checkbox" defaultChecked className="h-3 w-3 appearance-none border border-t-[#4a4846] border-r-white border-b-white border-l-[#4a4846] bg-white" />
          <Tick className="top-[2px] left-[2px]" />
        </span>
        Render
      </label>
      <button type="button" className="ml-[17px] flex items-center gap-1">
        <Svg size={16}>
          <circle cx="12" cy="12" r="11" fill="#8a8a8a" />
          <path d="M1 12h22M12 1v22M4 5q8 5 16 0M4 19q8-5 16 0" stroke="#c9c9c9" strokeWidth="1.500" />
          <ellipse cx="12" cy="12" rx="6" ry="11" stroke="#c9c9c9" strokeWidth="1.500" />
        </Svg>
        EPSG:3006
      </button>
      <button type="button" aria-label="Messages" className="ml-[18px]">
        <Svg size={17}>
          <path d="M12 2c6 0 11 4 11 9 0 3-1 5-3.500 6.500L20 23l-6-3.500C6 20.500 1 16 1 11c0-5 5-9 11-9z" fill="#555" />
          <circle cx="7" cy="11" r="1.700" fill="#eee" /><circle cx="12" cy="11" r="1.700" fill="#eee" /><circle cx="17" cy="11" r="1.700" fill="#eee" />
        </Svg>
      </button>
    </footer>
  );
}

export default function App() {
  return (
    <div className="flex h-screen flex-col overflow-hidden bg-[#d6d3d0] font-['DejaVu_Sans',sans-serif] text-[13px] leading-4 text-[#1c1c1c]">
      <TitleBar />
      <MenuBar />
      <Toolbars />
      <div className="flex min-h-0 flex-1 border-t-2 border-t-[#55524f]">
        <LayerToolbar />
        <div className="mr-[5px] flex w-[294px] shrink-0 flex-col">
          <BrowserPanel />
          <div className="mt-1 mb-[2px] h-[2px] shrink-0 border-t border-b border-t-[#4a4846] border-b-white" />
          <LayersPanel />
        </div>
        <MapCanvas />
      </div>
      <StatusBar />
    </div>
  );
}
